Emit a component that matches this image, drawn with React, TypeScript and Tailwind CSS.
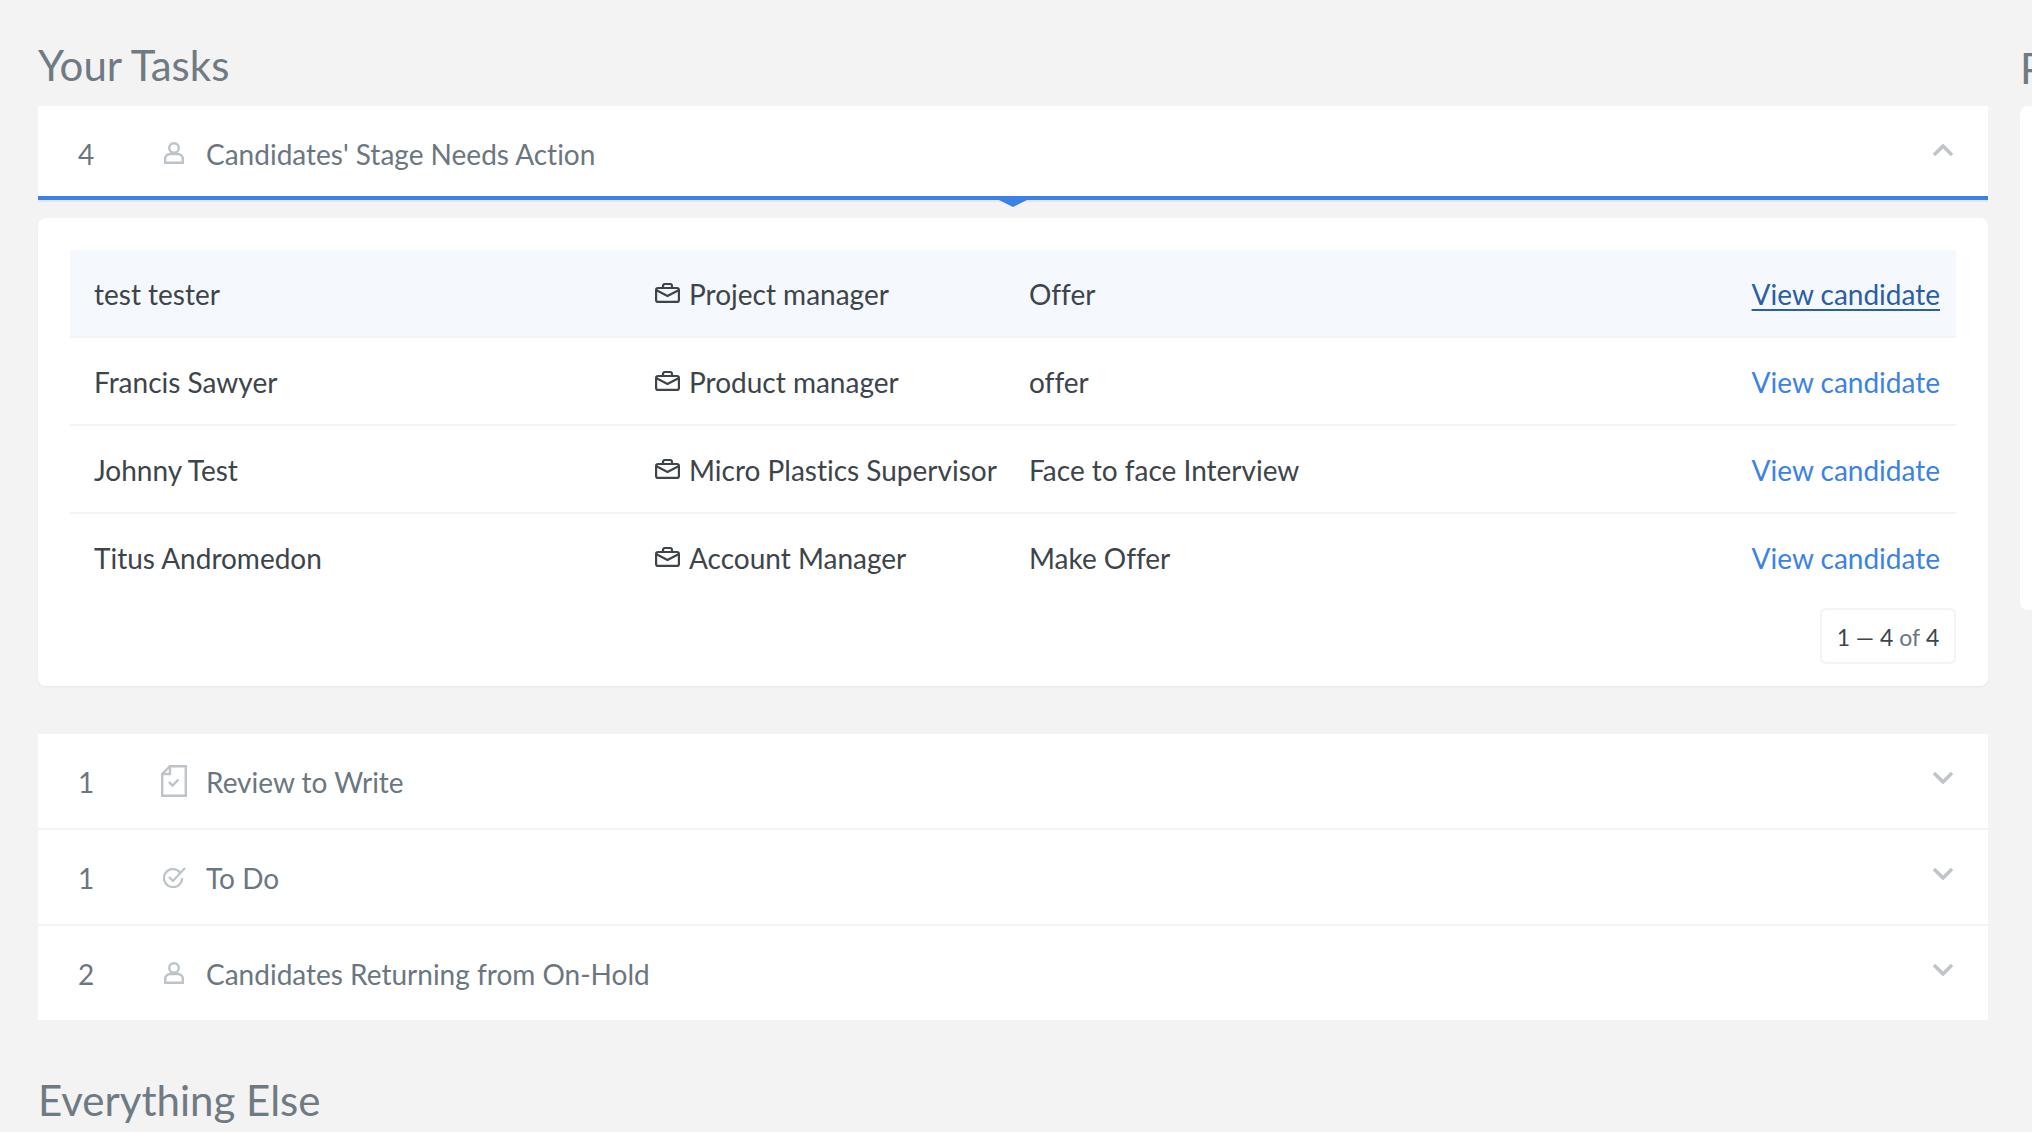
const candidates = [
  { name: 'test tester', job: 'Project manager', stage: 'Offer' },
  { name: 'Francis Sawyer', job: 'Product manager', stage: 'offer' },
  { name: 'Johnny Test', job: 'Micro Plastics Supervisor', stage: 'Face to face Interview' },
  { name: 'Titus Andromedon', job: 'Account Manager', stage: 'Make Offer' },
];

function PersonIcon() {
  return (
    <svg width="20" height="22" viewBox="0 0 20 22" fill="none" stroke="#bcc4ca" strokeWidth="2.4">
      <circle cx="10" cy="6" r="4.8" />
      <path d="M1.2 20.8V17a5 5 0 0 1 5-5h7.6a5 5 0 0 1 5 5v3.8z" />
    </svg>
  );
}

function ReviewIcon() {
  return (
    <svg width="26" height="32" viewBox="0 0 26 32" fill="none" stroke="#bcc4ca" strokeWidth="2.4">
      <path d="M9 1.2h15.8v29.6H1.2V9z" />
      <path d="M9 1.2V9H1.2" />
      <path d="M8 17l3.5 3.5 6-6" />
    </svg>
  );
}

function TodoIcon() {
  return (
    <svg width="23" height="21" viewBox="0 0 23 21" fill="none" stroke="#bcc4ca" strokeWidth="2.2">
      <path d="M17 5.5A9 9 0 1 0 19 11" />
      <path d="M6 10l4 4L22 1" />
    </svg>
  );
}

function BriefcaseIcon() {
  return (
    <svg width="25" height="20" viewBox="0 0 25 20" fill="none" stroke="#3d444a" strokeWidth="2.2">
      <rect x="1.1" y="5" width="22.8" height="13.9" rx="2" />
      <path d="M8 5V3a2 2 0 0 1 2-2h5a2 2 0 0 1 2 2v2" />
      <path d="M1 7l11.5 6L24 7" />
    </svg>
  );
}

function Chevron({ up }: { up?: boolean }) {
  return (
    <svg width="20" height="12" viewBox="0 0 20 12" fill="none" stroke="#bec4c9" strokeWidth="3.5" className="mb-[6px]">
      <path d={up ? 'M1 11l9-9 9 9' : 'M1 1l9 9 9-9'} />
    </svg>
  );
}

function TaskRow({ count, icon, label, up }: { count: number; icon: React.ReactNode; label: string; up?: boolean }) {
  return (
    <div className={`flex h-full items-center pr-[35px] pl-8 text-[#6b7680] ${up ? 'pt-[4px]' : ''}`}>
      <span className="w-8 pt-[2px] text-center">{count}</span>
      <span className="ml-[59px] flex w-[26px] justify-center">{icon}</span>
      <span className="ml-[19px] flex-1 pt-[2px]">{label}</span>
      <Chevron up={up} />
    </div>
  );
}

export default function App() {
  return (
    <div
      className="flex h-[1132px] w-[2032px] gap-8 overflow-hidden bg-[#f3f3f3] pl-[38px] text-[28px] leading-[36px] [font-variant-ligatures:none]"
      style={{ fontFamily: 'Lato, "Open Sans", sans-serif' }}
    >
      <main className="w-[1950px] shrink-0">
        <h2 className="mb-[17px] pt-[41px] text-[42px] leading-[48px] font-normal text-[#6f7a83]">Your Tasks</h2>

        <div className="relative h-[94px] border-b-4 border-[#3b82e6] bg-white shadow-[0_2px_0_#e4e6e8]">
          <TaskRow count={4} icon={<PersonIcon />} label="Candidates' Stage Needs Action" up />
          <div className="absolute top-[94px] left-[961px] h-0 w-0 border-x-[14px] border-t-[7px] border-x-transparent border-t-[#3b82e6]" />
        </div>

        <div className="mt-[18px] mb-12 h-[468px] rounded-lg bg-white px-8 pt-8 shadow-[0_1px_2px_rgba(0,0,0,0.05)]">
          {candidates.map((c, i) => (
            <div
              key={c.name}
              className={`grid h-[88px] grid-cols-[560px_375px_1fr_auto] items-center border-b-2 pr-4 pl-6 text-[#3d444a] ${i === 0 ? 'bg-[#f5f9fd]' : ''} ${i < 3 ? 'border-[#f3f3f3]' : 'border-transparent'}`}
            >
              <span className="pt-[2px]">{c.name}</span>
              <span className="flex items-center gap-[9px] pl-px">
                <BriefcaseIcon />
                <span className="pt-[2px]">{c.job}</span>
              </span>
              <span className="pt-[2px]">{c.stage}</span>
              <a
                href="#"
                className={`pt-[2px] ${i === 0 ? 'text-[#2a5ea5] underline decoration-2 underline-offset-4' : 'text-[#3b82e6]'}`}
              >
                View candidate
              </a>
            </div>
          ))}
          <div className="mt-[6px] flex justify-end">
            <div className="flex h-14 w-[136px] items-center justify-center rounded-md border-2 border-[#f3f3f3] pt-[2px] text-[23px] text-[#3d444a]">
              1 — 4&nbsp;<span className="text-[#6b7680]">of</span>&nbsp;4
            </div>
          </div>
        </div>

        <div className="divide-y-2 divide-[#f3f3f3] bg-white">
          <div className="h-24">
            <TaskRow count={1} icon={<ReviewIcon />} label="Review to Write" />
          </div>
          <div className="h-24">
            <TaskRow count={1} icon={<TodoIcon />} label="To Do" />
          </div>
          <div className="h-[94px]">
            <TaskRow count={2} icon={<PersonIcon />} label="Candidates Returning from On-Hold" />
          </div>
        </div>

        <h2 className="mt-14 text-[42px] leading-[48px] font-normal text-[#6f7a83]">Everything Else</h2>
      </main>

      <aside className="w-[600px] shrink-0">
        <h2 className="mb-[14px] pt-[44px] text-[42px] leading-[48px] font-normal text-[#6f7a83]">Pending</h2>
        <div className="h-[504px] rounded-lg bg-white" />
      </aside>
    </div>
  );
}
